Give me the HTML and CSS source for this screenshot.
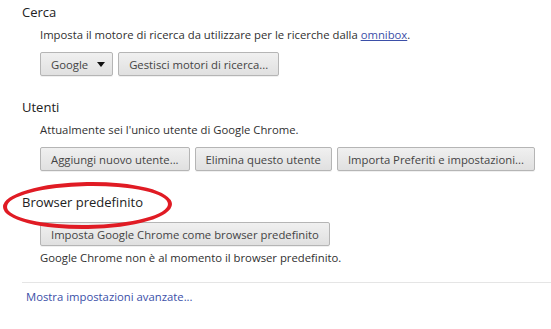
FILE: index.html
```html
<!DOCTYPE html>
<html lang="it">
  <head>
    <meta charset="UTF-8" />
    <title>Impostazioni</title>
    <link rel="stylesheet" href="styles.css">
  </head>
  <body>
    <div class="settings">
      <section class="section">
        <h3>Cerca</h3>
        <div class="section-body">
          <p>Imposta il motore di ricerca da utilizzare per le ricerche dalla <a href="#" class="link">omnibox</a>.</p>
          <div class="button-row">
            <button class="btn btn-select">Google <span class="caret"></span></button>
            <button class="btn">Gestisci motori di ricerca...</button>
          </div>
        </div>
      </section>

      <section class="section">
        <h3>Utenti</h3>
        <div class="section-body">
          <p>Attualmente sei l'unico utente di Google Chrome.</p>
          <div class="button-row">
            <button class="btn">Aggiungi nuovo utente...</button>
            <button class="btn">Elimina questo utente</button>
            <button class="btn">Importa Preferiti e impostazioni...</button>
          </div>
        </div>
      </section>

      <section class="section section-default">
        <h3 class="highlighted">Browser predefinito</h3>
        <div class="section-body">
          <div class="button-row">
            <button class="btn">Imposta Google Chrome come browser predefinito</button>
          </div>
          <p class="note">Google Chrome non è al momento il browser predefinito.</p>
        </div>
      </section>

      <div class="footer">
        <a href="#" class="advanced">Mostra impostazioni avanzate...</a>
      </div>
    </div>
  </body>
</html>
```

FILE: styles.css
```css
:root {
  --text-color: #303030;
  --link-color: #3b4fa8;
  --border-color: #b5b5b5;
  --mark-color: #e01b24;
}

* {
  box-sizing: border-box;
  margin: 0;
  padding: 0;
}

body {
  background: #fff;
  color: var(--text-color);
  font-family: "Open Sans", "Noto Sans", sans-serif;
  font-size: 11.3px;
  line-height: 16px;
}

.settings {
  padding-top: 2px;
}

.section {
  padding-left: 22px;
  margin-bottom: 21px;
}

.section h3 {
  font-size: 13px;
  font-weight: normal;
  line-height: 20px;
  color: #222;
}

.section-body {
  padding-left: 18px;
  padding-top: 5px;
}

.button-row {
  display: flex;
  gap: 5px;
  margin-top: 9px;
}

.section-default {
  margin-bottom: 16px;
}

.section-default .button-row {
  margin-top: 5px;
}

.btn {
  flex-shrink: 0;
  white-space: nowrap;
  height: 24px;
  padding: 0 10px;
  font-family: inherit;
  font-size: 11.3px;
  color: #444;
  background: linear-gradient(#f0f0f0, #e0e0e0);
  border: 1px solid var(--border-color);
  border-radius: 2px;
  box-shadow: 0 1px 0 rgba(0, 0, 0, 0.06);
}

.btn-select {
  display: flex;
  align-items: center;
  gap: 9px;
  padding-right: 7px;
}

.caret {
  width: 0;
  height: 0;
  border-left: 4px solid transparent;
  border-right: 4px solid transparent;
  border-top: 5px solid #111;
}

.link {
  color: var(--link-color);
}

.note {
  margin-top: 4px;
}

/* evidenziazione a mano */
.highlighted {
  position: relative;
  display: inline-block;
}

.highlighted::after {
  content: "";
  position: absolute;
  left: -19px;
  top: -10px;
  width: 161px;
  height: 39px;
  border: 4px solid var(--mark-color);
  border-radius: 50%;
  transform: rotate(-1deg);
}

.footer {
  margin-left: 22px;
  border-top: 1px solid #e5e5e5;
  padding: 6px 0 0 4px;
}

.advanced {
  color: var(--link-color);
  text-decoration: none;
}
```
